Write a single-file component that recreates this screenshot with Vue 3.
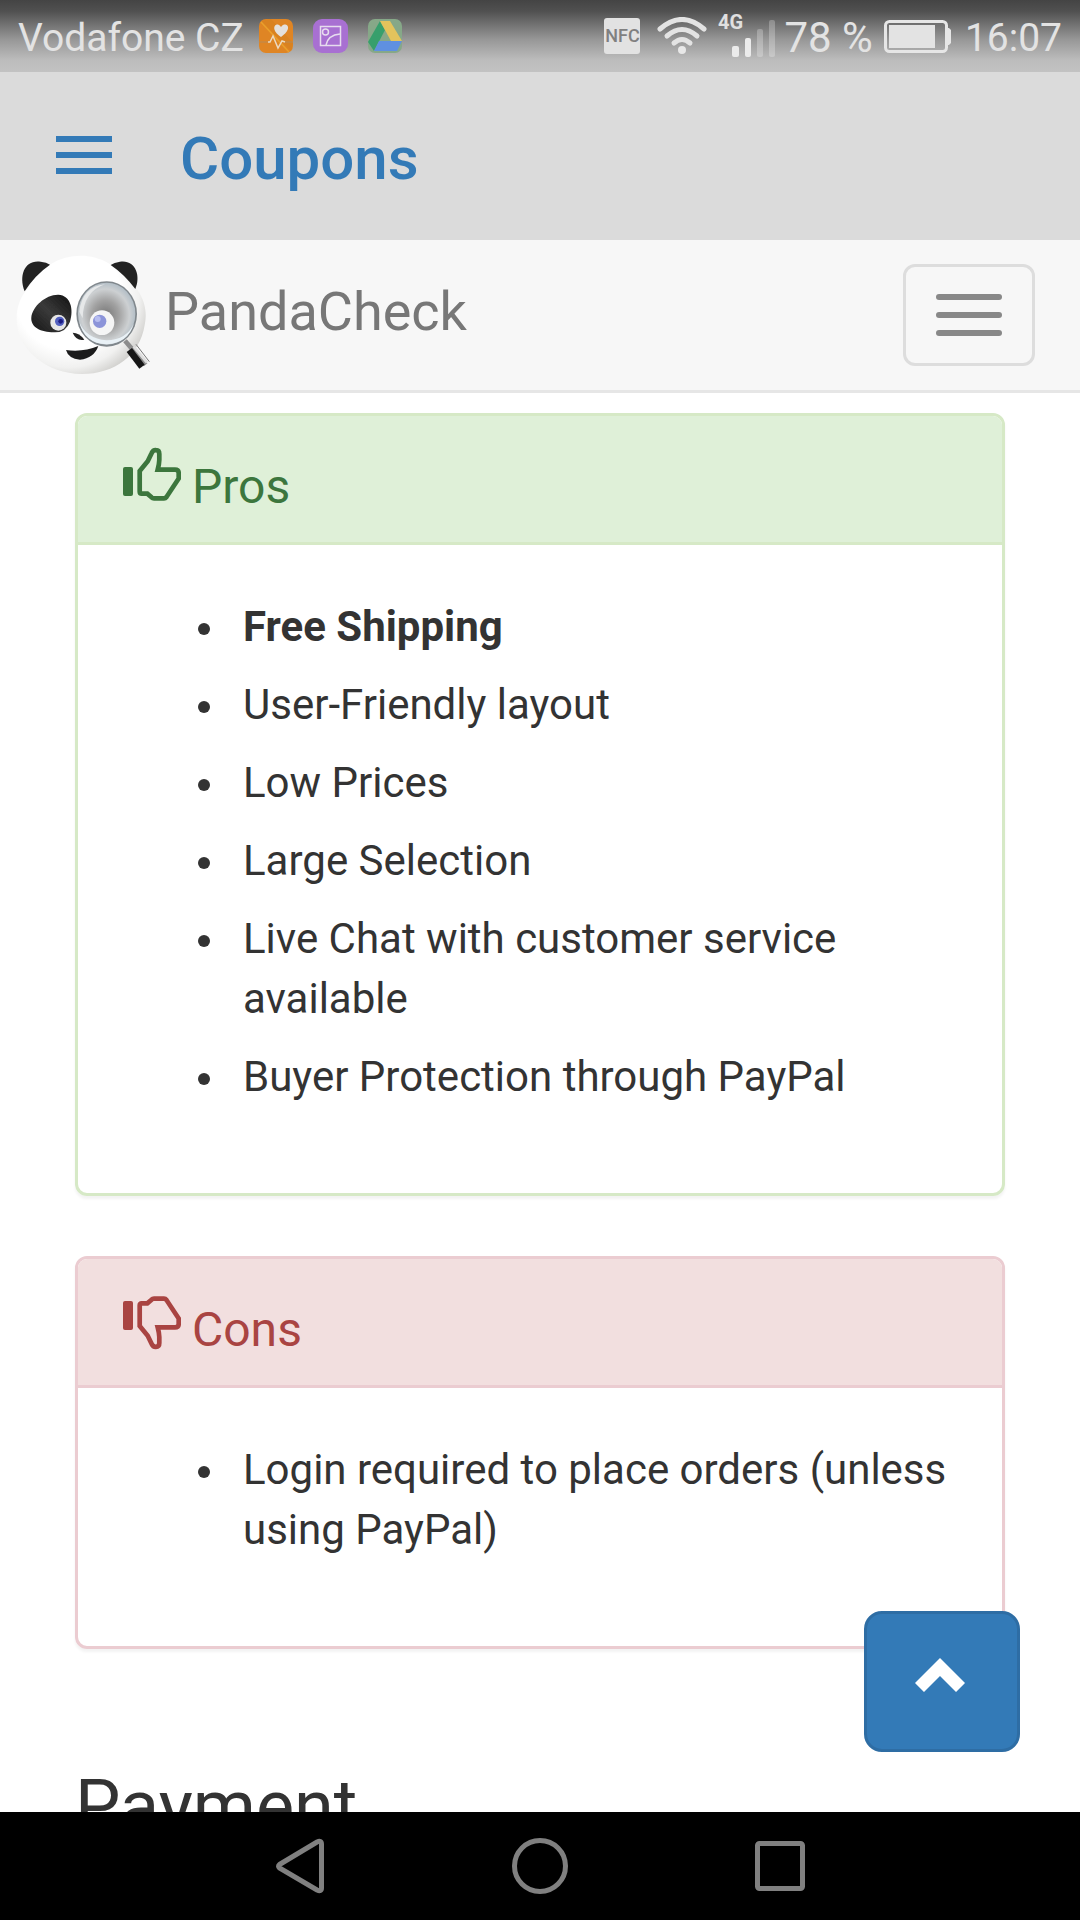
<template>
  <div class="screen">
    <div class="status-bar">
      <div class="status-group">
        <span class="status-text">Vodafone CZ</span>
        <div class="notifications">
          <svg width="34" height="34" viewBox="0 0 34 34">
            <rect width="34" height="34" rx="7" fill="#df8524" />
            <path d="M2 2 L32 32 L34 24 L12 0 Z" fill="#d98220" />
            <path d="M2 3 L30 33" stroke="#e9a02c" stroke-width="1.500" />
            <path d="M0 23 H10 M26 23 H34" stroke="#b98a55" stroke-width="1" />
            <path d="M9 23 h2 l3 -6 5 12 4 -7 3 1" fill="none" stroke="#ecd9c0" stroke-width="1.500" />
            <path d="M22 18 C12 11 15 5 19 5.500 Q21 6 22 8 Q23 6 25 5.500 C30 5 32 11 22 18 Z" fill="#e4e0dc" />
          </svg>
          <svg width="35" height="34" viewBox="0 0 35 34">
            <rect width="35" height="34" rx="9" fill="#a870d2" />
            <g fill="none" stroke="#e6dcee" stroke-width="1.500">
              <rect x="7.500" y="7.500" width="20" height="19" />
              <circle cx="12.500" cy="13" r="3" />
              <path d="M13 26 Q15 16 27 15" />
            </g>
          </svg>
          <svg width="34" height="34" viewBox="0 0 34 34">
            <rect width="34" height="34" rx="7" fill="#86a888" />
            <path d="M12 2 L17 11 L6 32 L0 23 Z" fill="#379f6c" />
            <path d="M12 2 H22 L34 22 H23 Z" fill="#e3c35c" />
            <path d="M11 22 H34 L29 32 H6 Z" fill="#5f90e0" />
          </svg>
        </div>
      </div>
      <div class="status-group right">
        <span class="nfc">NFC</span>
        <svg class="wifi" width="50" height="38" viewBox="0 0 50 38">
          <g fill="none" stroke="#e3e3e3" stroke-width="5" stroke-linecap="round">
            <path d="M3 12 Q25 -7 47 12" />
            <path d="M10 19 Q25 6 40 19" />
            <path d="M17 26 Q25 19 33 26" />
          </g>
          <circle cx="25" cy="33" r="4" fill="#e8e8e8" />
        </svg>
        <svg class="signal" width="58" height="46" viewBox="0 0 58 46">
          <text x="0" y="18" class="network">4G</text>
          <rect x="14" y="35" width="7" height="11" rx="2" fill="#ebebeb" />
          <rect x="27" y="27" width="6" height="19" rx="2" fill="#ebebeb" />
          <rect x="39" y="18" width="6" height="28" rx="2" fill="#fff" opacity=".25" />
          <rect x="51" y="9" width="6" height="37" rx="2" fill="#fff" opacity=".25" />
        </svg>
        <span class="status-text percent">78 %</span>
        <svg width="67" height="33" viewBox="0 0 67 33">
          <rect x="1.500" y="1.500" width="61" height="30" rx="4" fill="none" stroke="#e6e6e6" stroke-width="3" />
          <rect x="5" y="5" width="46" height="23" fill="#e3e3e3" />
          <path d="M63 8 h2 l2 2 v13 l-2 2 h-2 z" fill="#e6e6e6" />
        </svg>
        <span class="status-text clock">16:07</span>
      </div>
    </div>

    <header class="app-header">
      <button class="menu-button" type="button" aria-label="Menu">
        <span></span><span></span><span></span>
      </button>
      <h1>Coupons</h1>
    </header>

    <nav class="navbar">
      <a class="brand" href="#">
        <svg width="136" height="120" viewBox="45 45 408 360">
          <defs>
            <radialGradient id="face" gradientUnits="userSpaceOnUse" cx="205" cy="170" r="265">
              <stop offset="0.6" stop-color="#fff" />
              <stop offset="0.8" stop-color="#f1f1f0" />
              <stop offset="1" stop-color="#c9c8c5" />
            </radialGradient>
            <radialGradient id="lens" cx="48%" cy="52%" r="52%">
              <stop offset="0" stop-color="#777" />
              <stop offset="0.45" stop-color="#a2a2a2" />
              <stop offset="0.8" stop-color="#cdd0d2" />
              <stop offset="1" stop-color="#b4bfc7" />
            </radialGradient>
            <linearGradient id="patch" x1="0" y1="1" x2="1" y2="0">
              <stop offset="0" stop-color="#151515" />
              <stop offset="0.5" stop-color="#3a3a3a" />
              <stop offset="1" stop-color="#111" />
            </linearGradient>
            <filter id="soft">
              <feGaussianBlur stdDeviation="2" />
            </filter>
          </defs>
          <g filter="url(#soft)">
            <path d="M242 47 C300 47 354 78 390 125 C425 155 446 205 434 255 C420 345 345 402 245 402 C142 402 50 330 50 238 C50 195 65 165 84 145 C120 80 180 47 242 47 Z" fill="url(#face)" />
            <path d="M74 154 C55 105 75 58 122 65 Q140 67 150 74 Q105 105 74 154 Z" fill="#222" />
            <path d="M406 147 C424 105 405 58 360 65 Q342 67 332 75 Q372 102 406 147 Z" fill="#222" />
            <path d="M94 232 C97 200 137 163 175 164 C212 166 222 208 210 245 Q198 277 165 277 C125 278 91 263 94 232 Z" fill="url(#patch)" />
            <circle cx="175" cy="248" r="24" fill="#e6e6e6" />
            <circle cx="179" cy="244" r="14" fill="#5260bf" />
            <circle cx="182" cy="244" r="7" fill="#1c1b83" />
            <path d="M218 278 Q238 278 253 299 Q229 304 218 278 Z" fill="#222" />
            <path d="M198 330 Q250 337 295 318 Q282 355 240 359 Q205 356 198 330 Z" fill="#1d1d1d" />
            <path d="M375 302 L437 374" stroke="#8c8c8c" stroke-width="14" />
            <path d="M388 330 L426 380" stroke="#151515" stroke-width="20" />
            <path d="M401 320 L441 368" stroke="#ddd" stroke-width="8" />
            <path d="M408 313 L448 365" stroke="#777" stroke-width="3" />
            <ellipse cx="320" cy="222" rx="91" ry="98" fill="#80878c" />
            <ellipse cx="320" cy="221" rx="86" ry="93" fill="url(#lens)" />
            <path d="M238 245 Q252 310 320 313 Q385 310 402 250 Q380 300 320 301 Q257 295 238 245 Z" fill="#e9f1f6" />
            <path d="M238 215 Q246 140 315 133 Q249 155 248 235 Z" fill="#e6e8e9" />
            <circle cx="306" cy="248" r="37" fill="#f5f5f5" />
            <circle cx="299" cy="244" r="20" fill="#8c94d9" />
            <circle cx="293" cy="237" r="9" fill="#b7bdf0" />
          </g>
        </svg>
        <span>PandaCheck</span>
      </a>
      <button class="navbar-toggle" type="button" aria-label="Toggle navigation">
        <span></span><span></span><span></span>
      </button>
    </nav>

    <main class="content">
      <section v-for="panel in panels" :key="panel.title" class="panel" :class="panel.type">
        <div class="panel-heading">
          <svg width="58" height="68" viewBox="0 0 58 68">
            <g :transform="panel.type === 'danger' ? 'matrix(1 0 0 -1 0 64)' : null">
              <rect y="22" width="10" height="29" rx="2" fill="currentColor" />
              <path
                d="M16.700 26 L24.700 16.200 L28.700 8 Q30 5 33 5.200 Q36.300 5.200 36.300 9 V15 Q36.200 19 34.700 24.700 H52 Q55.700 24.700 55.700 28 V33.500 L43.500 52 Q42.500 53.300 41 53.300 H31 Q29.500 53.300 28.500 52.300 L24.300 48.700 H18.700 Q16.700 48.700 16.700 46.500 Z"
                fill="none" stroke="currentColor" stroke-width="4.700" />
            </g>
          </svg>
          <h2>{{ panel.title }}</h2>
        </div>
        <div class="panel-body">
          <ul>
            <li v-for="item in panel.items" :key="item.text">
              <strong v-if="item.bold">{{ item.text }}</strong>
              <template v-else>{{ item.text }}</template>
            </li>
          </ul>
        </div>
      </section>
      <h2 class="section-title">Payment</h2>

      <button class="to-top" type="button" aria-label="Back to top">
        <svg width="50" height="34" viewBox="0 0 50 34">
          <path d="M25 0 L50 25 L41 34 L25 18 L9 34 L0 25 Z" fill="#fff" />
        </svg>
      </button>
    </main>

    <footer class="system-nav">
      <button type="button" aria-label="Back">
        <svg width="56" height="56" viewBox="0 0 56 56">
          <path d="M7.500 26.500 L45 4 Q49.500 2 49.500 6 V50 Q49.500 54 45 52 L7.500 30 Q5.500 28 7.500 26.500 Z" />
        </svg>
      </button>
      <button type="button" aria-label="Home">
        <svg width="56" height="56" viewBox="0 0 56 56">
          <circle cx="28" cy="28" r="25.500" />
        </svg>
      </button>
      <button type="button" aria-label="Recent apps">
        <svg width="56" height="56" viewBox="0 0 56 56">
          <rect x="5.500" y="5.500" width="45" height="45" rx="2" />
        </svg>
      </button>
    </footer>
  </div>
</template>

<script setup>
import { ref } from 'vue';

// type controls the panel colours and which way the thumb points
const panels = ref([
  {
    title: 'Pros',
    type: 'success',
    items: [
      { text: 'Free Shipping', bold: true },
      { text: 'User-Friendly layout' },
      { text: 'Low Prices' },
      { text: 'Large Selection' },
      { text: 'Live Chat with customer service available' },
      { text: 'Buyer Protection through PayPal' }
    ]
  },
  {
    title: 'Cons',
    type: 'danger',
    items: [{ text: 'Login required to place orders (unless using PayPal)' }]
  }
]);
</script>

<style>
body {
  margin: 0;
}
</style>

<style scoped>
.screen {
  display: flex;
  flex-direction: column;
  height: 100vh;
  background: #fff;
  color: #333;
  font-family: Roboto, "Liberation Sans", sans-serif;
  font-size: 42px;
  line-height: 60px;
}

.screen * {
  box-sizing: border-box;
}

svg {
  display: block;
  flex: none;
}

button {
  margin: 0;
  padding: 0;
  border: none;
  background: none;
  cursor: pointer;
}

h1,
h2 {
  margin: 0;
}

.status-bar {
  display: flex;
  flex: none;
  justify-content: space-between;
  height: 72px;
  padding: 0 18px;
  background: linear-gradient(#444 0, #505050 11px, #989898 40px, #bcbcbc 60px, #c2c2c2 72px);
}

.status-group {
  display: flex;
  align-items: center;
  gap: 15px;
}

.status-group.right {
  gap: 11px;
}

.notifications {
  display: flex;
  gap: 20px;
}

.status-text {
  padding-top: 4px;
  color: #e3e3e3;
  font-size: 39px;
  white-space: nowrap;
}

.percent {
  font-size: 42px;
}

.clock {
  margin-left: 3px;
}

.nfc {
  width: 36px;
  height: 36px;
  border-radius: 3px;
  background: #e2e2e2;
  color: #808080;
  font-size: 18px;
  font-weight: 500;
  line-height: 36px;
  text-align: center;
}

.wifi {
  margin-left: 6px;
}

.signal {
  margin: 0 -3px 4px 0;
}

.network {
  fill: #e0e0e0;
  font-size: 20px;
  font-weight: 700;
}

.app-header {
  display: flex;
  flex: none;
  align-items: center;
  gap: 68px;
  height: 168px;
  padding: 0 56px;
  background: #dbdbdb;
  color: #337ab7;
}

.app-header h1 {
  padding-top: 5px;
  font-size: 60px;
  font-weight: 500;
}

.menu-button {
  display: grid;
  gap: 10px;
  width: 56px;
  padding-bottom: 2px;
}

.menu-button span {
  height: 6px;
  background: #337ab7;
}

.navbar {
  display: flex;
  flex: none;
  align-items: center;
  justify-content: space-between;
  height: 153px;
  padding: 0 45px 0 15px;
  border-bottom: 3px solid #e6e6e6;
  background: #f7f7f7;
}

.brand {
  display: flex;
  align-items: center;
  gap: 14px;
  color: #777;
  font-size: 54px;
  text-decoration: none;
}

.brand span {
  padding-bottom: 6px;
}

.navbar-toggle {
  display: grid;
  align-content: center;
  justify-content: center;
  gap: 12px;
  width: 132px;
  height: 102px;
  border: 3px solid #ddd;
  border-radius: 12px;
}

.navbar-toggle span {
  width: 66px;
  height: 6px;
  border-radius: 3px;
  background: #888;
}

.content {
  position: relative;
  flex: 1;
  min-height: 0;
  padding: 20px 75px 0;
  overflow: hidden;
}

.panel {
  margin-bottom: 60px;
  border: 3px solid;
  border-radius: 12px;
  box-shadow: 0 3px 3px rgba(0, 0, 0, 0.05);
}

.panel-heading {
  display: flex;
  align-items: flex-end;
  gap: 11px;
  padding: 29px 45px;
  border-bottom: 3px solid;
  border-radius: 9px 9px 0 0;
}

.panel-heading h2 {
  font-size: 48px;
  font-weight: 400;
  line-height: 52px;
}

.success,
.success .panel-heading {
  border-color: #d6e9c6;
}

.success .panel-heading {
  background: #dff0d8;
  color: #3c763d;
}

.danger,
.danger .panel-heading {
  border-color: #ebccd1;
}

.danger .panel-heading {
  background: #f2dfdf;
  color: #a94442;
}

.panel-body {
  padding: 43px 45px 47px;
}

.panel-body ul {
  margin: 0 0 30px;
  padding: 0 0 0 75px;
  list-style: none;
}

.panel-body li {
  display: flex;
  gap: 33px;
  padding: 9px 0;
}

/* round bullet, level with the first line */
.panel-body li::before {
  content: "";
  flex: none;
  width: 12px;
  height: 12px;
  margin-top: 26px;
  border-radius: 50%;
  background: #333;
}

.section-title {
  padding-top: 58px;
  font-size: 72px;
  font-weight: 400;
  line-height: 80px;
}

.to-top {
  position: absolute;
  right: 60px;
  bottom: 60px;
  display: grid;
  place-content: center;
  width: 156px;
  height: 141px;
  padding: 0 5px 14px 0;
  border: 3px solid #2e6da4;
  border-radius: 18px;
  background: #337ab7;
}

.system-nav {
  display: flex;
  flex: none;
  justify-content: center;
  height: 108px;
  background: #000;
}

.system-nav button {
  display: grid;
  place-content: center;
  width: 240px;
}

.system-nav svg {
  fill: none;
  stroke: #808080;
  stroke-width: 5px;
}
</style>
